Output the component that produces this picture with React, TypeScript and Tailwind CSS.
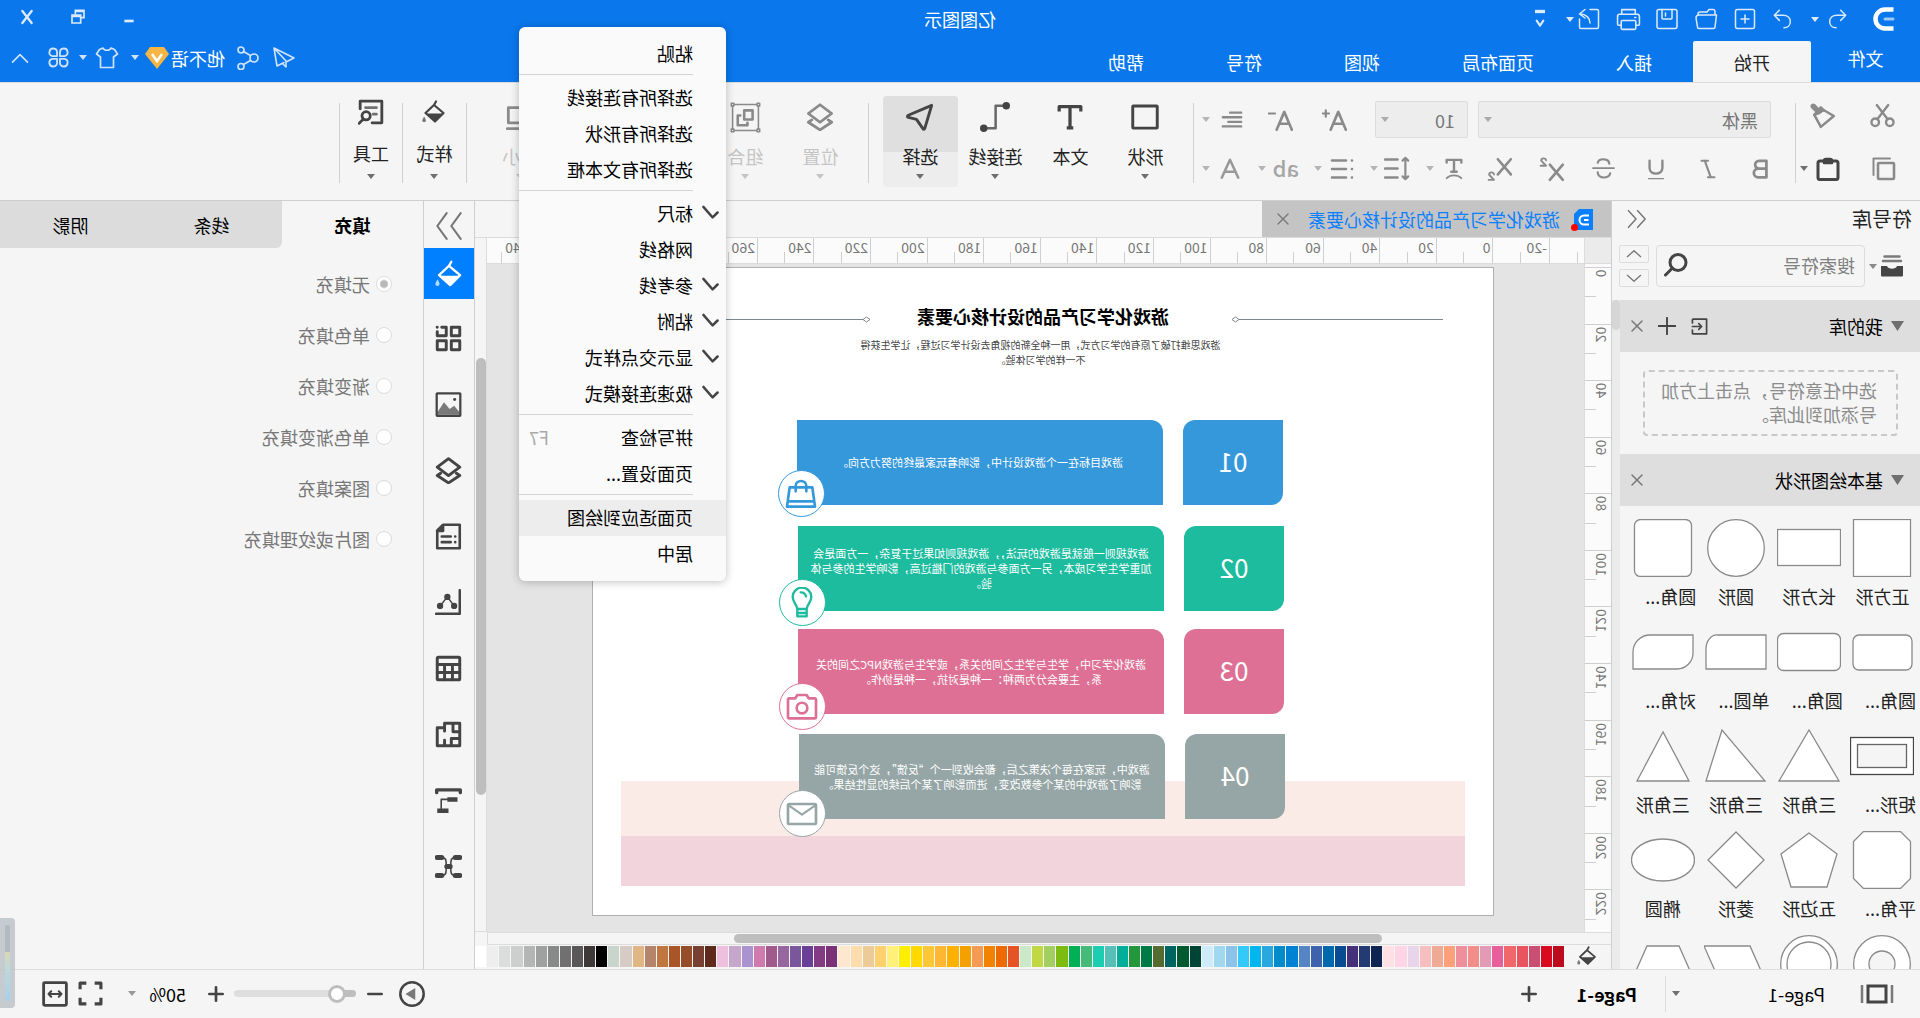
import { useState, type ReactNode } from "react";
import clsx from "clsx";

/* ---------- data ---------- */

const TABS = ["开始", "插入", "页面布局", "视图", "符号", "帮助"];

const SWATCHES = [
  "#bb0b1c", "#d9091f", "#c94f73", "#e8555f", "#f0686c", "#e7609b", "#e39ab4", "#f18e8a", "#f08f9c", "#ffa07a",
  "#eeaa94", "#f6bfbf", "#e8d5ea", "#ffd4e4", "#ffe0e4", "#0e2552", "#233a72", "#45307a", "#084b93", "#0068ac",
  "#3f62ad", "#5585c3", "#0082d4", "#008bcb", "#29a8e0", "#00b6ee", "#33c9f9", "#8bc3ea", "#a0d8ef", "#cdebf8",
  "#004436", "#005a2f", "#006460", "#556b2f", "#007a47", "#24973d", "#00ae9a", "#57bfb8", "#1dcdb1", "#45ba79",
  "#00b054", "#7dbb10", "#a3cf62", "#bfd844", "#cbe8c9", "#e55425", "#ee6a00", "#f28300", "#f39a55", "#f4a100",
  "#ffb100", "#ffb733", "#fbc737", "#ffd900", "#ffee00", "#fff07a", "#ffd06e", "#eccb96", "#ffdcab", "#fee7cf",
  "#7b3177", "#833b84", "#6a3f97", "#7a569b", "#9767a0", "#a15a8c", "#cf7bb0", "#ab93cf", "#c6a6cb", "#edc1de",
  "#5e2a1b", "#783f33", "#964e2a", "#a95527", "#c0773f", "#b4856b", "#dfb684", "#d6cbc5", "#c9d4cc", "#000000",
  "#3f3838", "#595757", "#707070", "#888989", "#9fa1a0", "#b4b6b5", "#cdcfce", "#dbdcdc", "#eeeeee", "#ffffff",
];

type MenuEntry = { label: string; checked?: boolean; shortcut?: string; active?: boolean };

const MENU: MenuEntry[][] = [
  [{ label: "粘贴" }],
  [{ label: "选择所有连接线" }, { label: "选择所有形状" }, { label: "选择所有文本框" }],
  [
    { label: "标尺", checked: true },
    { label: "网格线" },
    { label: "参考线", checked: true },
    { label: "粘附", checked: true },
    { label: "显示交点样式", checked: true },
    { label: "极速连接模式", checked: true },
  ],
  [{ label: "拼写检查", shortcut: "F7" }, { label: "页面设置..." }],
  [{ label: "页面适应到绘图", active: true }, { label: "居中" }],
];

const FILLS = ["无填充", "单色填充", "渐变填充", "单色渐变填充", "图案填充", "图片或纹理填充"];

const SHAPES: { label: string; art: ReactNode }[] = [
  { label: "正方形", art: <rect x="3.5" y="0.5" width="57" height="57" /> },
  { label: "长方形", art: <rect x="0.5" y="10.5" width="63" height="36" /> },
  { label: "圆形", art: <circle cx="32" cy="29" r="28.3" /> },
  { label: "圆角...", art: <rect x="3.5" y="0.5" width="57" height="57" rx="6" /> },
  { label: "圆角...", art: <rect x="2" y="12" width="59" height="35" rx="6" /> },
  { label: "圆角...", art: <rect x="0.5" y="10.5" width="63" height="37" rx="6" /> },
  { label: "单圆...", art: <path d="M2 12h48a11 14 0 0 1 12 14v20H2Z" /> },
  { label: "对角...", art: <path d="M2 12h43a17 17 0 0 1 17 17v17H18a16 16 0 0 1-16-16Z" /> },
  { label: "矩形...", art: <><rect x="0.5" y="10.5" width="63" height="37" stroke="#444" /><rect x="7.5" y="17.5" width="49" height="23" fill="#f5f5f5" stroke="#666" /></> },
  { label: "三角形", art: <path d="M32 3 62 54H2Z" /> },
  { label: "三角形", art: <path d="M46 3 62 54H3Z" /> },
  { label: "三角形", art: <path d="M32 5 58 54H6Z" /> },
  { label: "平角...", art: <path d="M13.5.5h37l10 10v37l-10 10h-37l-10-10v-37Z" /> },
  { label: "五边形", art: <path d="M32 2 60 23 50 56H14L4 23Z" /> },
  { label: "菱形", art: <path d="M32 1 60 29 32 57 4 29Z" /> },
  { label: "椭圆", art: <ellipse cx="32" cy="29" rx="31.5" ry="21" /> },
  { label: "", art: <><circle cx="32" cy="29" r="28.3" /><circle cx="32" cy="29" r="13" fill="#f5f5f5" /></> },
  { label: "", art: <><circle cx="32" cy="29" r="28.3" /><circle cx="32" cy="29" r="22" /></> },
  { label: "", art: <path d="M18 11h46L48 47H2Z" /> },
  { label: "", art: <path d="M16 11h32l16 36H0Z" /> },
];

/* ---------- icons ---------- */

type IcoProps = { size?: number; sw?: number; className?: string; children: ReactNode };

function Ico({ size = 24, sw = 2, className, children }: IcoProps) {
  return (
    <svg
      width={size}
      height={size}
      viewBox="0 0 24 24"
      fill="none"
      stroke="currentColor"
      strokeWidth={sw}
      strokeLinecap="round"
      strokeLinejoin="round"
      className={clsx("shrink-0", className)}
      aria-hidden
    >
      {children}
    </svg>
  );
}

function Caret({ className = "text-[#6f6f6f]" }: { className?: string }) {
  return (
    <svg width="8" height="5" viewBox="0 0 8 5" className={clsx("shrink-0", className)} aria-hidden>
      <path d="M0 0h8L4 5Z" fill="currentColor" />
    </svg>
  );
}

const bucket = (
  <>
    <path d="M10 1.5 12 5 2.5 13 11 21.5 20.5 13 11.5 4.5" />
    <path d="M3 13.5h17L11 22Z" fill="currentColor" stroke="none" />
    <path d="M21.8 16.5c1.6 2.6 1.9 3.3 1.9 4a1.8 1.8 0 0 1-3.6 0c0-.7.3-1.4 1.7-4Z" fill="currentColor" stroke="none" opacity=".7" />
  </>
);

const layers = (
  <>
    <path d="M12 1.5 22 9l-10 7.5L2 9Z" />
    <path d="M5 14.5 2 16.5 12 23l10-6.5-3-2" />
  </>
);

/* ---------- title bar ---------- */

function IconButton({ label, className, children }: { label: string; className?: string; children: ReactNode }) {
  return (
    <button type="button" aria-label={label} className={clsx("flex items-center justify-center shrink-0", className)}>
      {children}
    </button>
  );
}

function TitleBar() {
  const [tab, setTab] = useState("开始");
  return (
    <header className="bg-[#0a77ec] text-white shrink-0">
      <div className="grid grid-cols-[1fr_auto_1fr] h-[41px] text-[#dbeafc]">
        <div className="flex items-center pl-6 pb-[3px]">
          <Ico size={24} sw={4.5} className="text-white">
            <path d="M2.5 2.5H11a9.5 9.5 0 0 1 0 19H2.5" strokeLinecap="butt" />
            <path d="M3 12h8" strokeWidth="3" opacity=".6" />
          </Ico>
          <IconButton label="撤销" className="ml-[23px] w-6">
            <Ico size={22} sw={1.6}><path d="M8 2.5 2.5 8 8 13.5M3 8h9c5 0 8 3 8 7s-3 6.5-7 6.5" /></Ico>
          </IconButton>
          <Caret className="ml-1.5 text-[#dbeafc]" />
          <IconButton label="恢复" className="ml-4 w-6">
            <Ico size={22} sw={1.6}><path d="M16 2.5 21.5 8 16 13.5M21 8h-9c-5 0-8 3-8 7s3 6.5 7 6.5" /></Ico>
          </IconButton>
          <IconButton label="新建" className="w-[39px] ml-[6px]">
            <Ico size={24} sw={1.5}><rect x="2.5" y="2.5" width="19" height="19" rx="2" /><path d="M12 8v8M8 12h8" /></Ico>
          </IconButton>
          <IconButton label="打开" className="w-[39px]">
            <Ico size={24} sw={1.5}><path d="M3 8V4.5a2 2 0 0 1 2-2h4L11 5h7a2 2 0 0 1 2 2v1M1.5 8H19c2 0 3 1 3 3l-1.5 9a1.5 1.5 0 0 1-1.5 1.5H4.5A1.5 1.5 0 0 1 3 20Z" /></Ico>
          </IconButton>
          <IconButton label="保存" className="w-[39px]">
            <Ico size={24} sw={1.5}><rect x="2" y="2.5" width="20" height="19" rx="2" /><path d="M7 2.5V11a1 1 0 0 0 1 1h8a1 1 0 0 0 1-1V2.5M13.5 6v3" /></Ico>
          </IconButton>
          <IconButton label="打印" className="w-[39px]">
            <Ico size={25} sw={1.5}><path d="M5.5 7V2.5h13V7M5 17.5H2.5a1 1 0 0 1-1-1V9a2 2 0 0 1 2-2h17a2 2 0 0 1 2 2v7.5a1 1 0 0 1-1 1H19" /><rect x="5" y="13" width="14" height="8.5" rx="1" /><path d="M5 10h1" /></Ico>
          </IconButton>
          <IconButton label="导出" className="w-[39px]">
            <Ico size={24} sw={1.5}><path d="M11 2.5H4A1.5 1.5 0 0 0 2.5 4v16A1.5 1.5 0 0 0 4 21.5h16a1.5 1.5 0 0 0 1.5-1.5v-8M16 2.5 21.5 7 16 11M21 7c-6 0-10 4-10 9" /></Ico>
          </IconButton>
          <Caret className="-ml-1 text-[#dbeafc]" />
          <IconButton label="自定义" className="ml-[14px] w-6">
            <Ico size={20} sw={2.5}><path d="M6 3h12" strokeWidth="4" strokeLinecap="butt" /><path d="m8 14 4 6 4-6" /></Ico>
          </IconButton>
        </div>
        <div className="self-center pb-[3px] text-[18px] leading-6 text-white">亿图图示</div>
        <div className="flex items-center justify-end pr-3 pb-2 gap-[21px]">
          <IconButton label="最小化" className="w-[30px]">
            <Ico size={16} sw={4}><path d="M5 18h14" strokeLinecap="butt" /></Ico>
          </IconButton>
          <IconButton label="还原" className="w-[30px]">
            <Ico size={16} sw={2.5}><path d="M16 7V2H3v11h5M3 3.5h13" strokeLinejoin="miter" /><path d="M8 9h13v12H8ZM8 11h13" strokeLinejoin="miter" /></Ico>
          </IconButton>
          <IconButton label="关闭" className="w-[30px]">
            <Ico size={16} sw={3.5}><path d="m5 3 14 18M19 3 5 21" /></Ico>
          </IconButton>
        </div>
      </div>

      <div className="flex h-[41px] text-[18px] leading-6">
        <button type="button" className="w-[109px] pb-2">文件</button>
        <nav className="flex">
          {TABS.map((t) => (
            <button
              key={t}
              type="button"
              onClick={() => setTab(t)}
              className={clsx("px-[41px] rounded-t-xs", t === tab && "bg-[#f5f5f5] text-[#222]")}
            >
              {t}
            </button>
          ))}
        </nav>
        <div className="ml-auto flex items-center pb-[8px] pr-[10px] text-[#cfe3fb]">
          <Ico size={24} sw={1.6}><path d="M22 2 2 12l7 3.5M22 2l-3 18-7-3.5M22 2 10 15v6l3-3" /></Ico>
          <Ico size={24} sw={1.7} className="ml-3">
            <circle cx="6" cy="12" r="4" /><circle cx="19" cy="4" r="3" /><circle cx="19" cy="20.5" r="3" /><path d="m9.5 9.5 7-4M9.5 14.5l7 4" />
          </Ico>
          <span className="ml-[11px] pt-px text-white">他不语</span>
          <svg width="26" height="24" viewBox="0 0 26 24" className="ml-px" aria-hidden>
            <path d="M6 1h14l5 7-12 15L1 8Z" fill="#f6b645" />
            <path d="m8 8 5 7 5-7" fill="none" stroke="#fff" strokeWidth="2.5" />
          </svg>
          <Caret className="ml-[5px] text-[#cfe3fb]" />
          <Ico size={24} sw={1.7} className="ml-3">
            <path d="M8 2c1 3 7 3 8 0l3.5 1.5 3 4.5-4 3v10.5h-13V11l-4-3 3-4.5Z" />
          </Ico>
          <Caret className="ml-2 text-[#cfe3fb]" />
          <Ico size={23} sw={1.9} className="ml-[9px]">
            <path d="M10.5 10.5h-5a4 4 0 1 1 5-4Zm3 0h5a4 4 0 1 0-5-4Zm-3 3h-5a4 4 0 1 0 5 4Zm3 0h5a4 4 0 1 1-5 4Z" />
          </Ico>
          <IconButton label="收起功能区" className="ml-[17px]">
            <Ico size={20} sw={2}><path d="m3 17 9-9 9 9" /></Ico>
          </IconButton>
        </div>
      </div>
    </header>
  );
}

/* ---------- ribbon ---------- */

function Sep() {
  return <div className="w-px h-20 mt-5 bg-[#cfcfcf] shrink-0" />;
}

function FontTool({ label, wide, children }: { label: string; wide?: boolean; children: ReactNode }) {
  if (wide)
    return (
      <button type="button" aria-label={label} className="flex items-center w-14">
        <span className="w-10 flex justify-center">{children}</span>
        <Caret className="text-[#b5b5b5]" />
      </button>
    );
  return <IconButton label={label} className="w-[52px]">{children}</IconButton>;
}

function FontSelect({ label, value, className }: { label: string; value: string; className: string }) {
  return (
    <div className="relative">
      <select
        aria-label={label}
        className={clsx(
          "appearance-none block h-[37px] pl-3 bg-[#ededed] border border-[#dcdcdc] rounded-xs text-[18px] leading-6 text-[#777]",
          className,
        )}
      >
        <option>{value}</option>
      </select>
      <Caret className="absolute right-[6px] top-4 text-[#aaa]" />
    </div>
  );
}

type BigToolProps = { label: string; width?: string; caret?: boolean; active?: boolean; disabled?: boolean; raised?: boolean; children: ReactNode };

function BigTool({ label, width = "w-[75px]", caret = true, active, disabled, raised, children }: BigToolProps) {
  return (
    <button
      type="button"
      disabled={disabled}
      className={clsx(
        "mt-[13px] h-[91px] flex flex-col items-center shrink-0 rounded-sm text-[18px] leading-6",
        width,
        raised ? "pt-[2px]" : "pt-[7px]",
        active && "bg-[linear-gradient(to_bottom,#dfdfdf_56px,#ededed_56px)]",
        disabled ? "text-[#c4c4c4]" : "text-[#222]",
      )}
    >
      <span className={clsx("h-7 flex items-center", disabled ? "text-[#8a8a8a]" : "text-[#444]")}>{children}</span>
      <span className={raised ? "mt-[15px]" : "mt-[13px]"}>{label}</span>
      {caret && <Caret className={clsx(raised ? "mt-[9px]" : "mt-[6px]", disabled ? "text-[#c4c4c4]" : "text-[#6f6f6f]")} />}
    </button>
  );
}

function Ribbon() {
  return (
    <div className="h-[119px] shrink-0 flex bg-[#f5f5f5] border-b border-[#cfcfcf] border-t border-t-[#dcdcdc]">
      <div className="w-[124px] pt-[18px] flex flex-col gap-3 text-[#8a8a8a] shrink-0">
        <div className="flex h-[37px] pb-2">
          <IconButton label="剪切" className="w-[74px]">
            <Ico size={25} sw={2.3}><circle cx="5" cy="18.5" r="3.6" /><circle cx="19" cy="18.5" r="3.6" /><path d="M7 15.5 17.5 2M17 15.5 6.5 2" /></Ico>
          </IconButton>
          <IconButton label="格式刷" className="w-[46px]">
            <Ico size={26} sw={2.3}><path d="M11.5 6.5 2 12l12 10 6-11Z" /><path d="m11.5 6.5 8.5 4.5-6-7Z" fill="currentColor" /><path d="m16 8 5-5" strokeWidth="5" /></Ico>
          </IconButton>
        </div>
        <div className="flex h-[37px]">
          <IconButton label="复制" className="w-[72px]">
            <Ico size={24} sw={2.6}><rect x="2" y="6" width="16" height="16" rx="1" /><path d="M6 1.5h16.5V18" strokeWidth="2" /></Ico>
          </IconButton>
          <button type="button" aria-label="粘贴" className="flex items-center text-[#444]">
            <span className="w-10 flex justify-center">
              <Ico size={24} sw={3}><rect x="2" y="4" width="20" height="18.5" rx="2" /><path d="M8 6h8V4a2 2 0 0 0-2-2h-4a2 2 0 0 0-2 2Z" strokeWidth="2.5" /></Ico>
            </span>
            <Caret />
          </button>
        </div>
      </div>
      <Sep />

      <div className="pt-[18px] pl-[9px] flex flex-col gap-3 text-[#8a8a8a] shrink-0">
        <div className="flex items-center h-[37px]">
          <div className="flex gap-[10px] ml-[15px]">
            <FontSelect label="字体" value="黑体" className="w-[293px]" />
            <FontSelect label="字号" value="10" className="w-[93px]" />
          </div>
          <IconButton label="增大字号" className="w-[54px] ml-[13px]">
            <Ico size={26} sw={2.4}><path d="M2 21 9 4.5 16 21M5 15.5h8" /><path d="M20.5 3v6M17.5 6h6" strokeWidth="2" /></Ico>
          </IconButton>
          <IconButton label="减小字号" className="w-[54px]">
            <Ico size={26} sw={2.4}><path d="M2 21 9 4.5 16 21M5 15.5h8" /><path d="M17.5 6h6" strokeWidth="2" /></Ico>
          </IconButton>
          <button type="button" aria-label="对齐" className="flex items-center">
            <span className="w-11 flex justify-center">
              <Ico size={22} sw={2.6}><path d="M2 4h12M2 9h20M2 14h14M2 19h20" /></Ico>
            </span>
            <Caret className="text-[#b5b5b5]" />
          </button>
        </div>
        <div className="flex items-center h-[37px]">
          <FontTool label="加粗"><Ico size={22} sw={3}><path d="M5 3h8a4.3 4.3 0 0 1 0 8.6H5ZM5 11.6h9a4.7 4.7 0 0 1 0 9.4H5Z" /></Ico></FontTool>
          <FontTool label="斜体"><Ico size={22} sw={2.4}><path d="M12 3h7M5 21h7M15.5 3 9 21" /></Ico></FontTool>
          <FontTool label="下划线"><Ico size={22} sw={2.6}><path d="M5 3v8c0 8 14 8 14 0V3" /><path d="M4 22.5h16" strokeWidth="1.6" /></Ico></FontTool>
          <FontTool label="删除线"><Ico size={23} sw={2.3}><path d="M18 6c-1-5-12-5-12 1M18 16c0 7-12 7-13 1" /><path d="M1 11.5h22" strokeWidth="1.8" /></Ico></FontTool>
          <FontTool label="上标"><Ico size={26} sw={2.4}><path d="m2 8 12 14M14 8 2 22" /><path d="M17.5 4c0-2.5 5-2.5 4.5.3L17.5 9h5" strokeWidth="1.7" /></Ico></FontTool>
          <FontTool label="下标"><Ico size={26} sw={2.4}><path d="m2 3 12 14M14 3 2 17" /><path d="M17.5 17c0-2.5 5-2.5 4.5.3L17.5 22h5" strokeWidth="1.7" /></Ico></FontTool>
          <FontTool label="文字方向" wide><Ico size={22} sw={2.6}><path d="M4 5V2h16v3M12 2v13M9 15h6" /><path d="M4 22c4-4 12-4 16 0" strokeWidth="2" /></Ico></FontTool>
          <FontTool label="行距" wide><Ico size={27} sw={2.3}><path d="M5 2.5v19M2.5 5 5 2.5 7.5 5M2.5 19 5 21.5 7.5 19" strokeWidth="1.9" /><path d="M12 4h11M12 12h11M12 20h11" /></Ico></FontTool>
          <FontTool label="项目符号" wide><Ico size={24} sw={2.6}><path d="M8 3.5h14M8 12h14M8 20.5h14M2 3.5h.1M2 12h.1M2 20.5h.1" /></Ico></FontTool>
          <FontTool label="大小写" wide><span className="pb-1 text-[22px] leading-7 font-medium text-[#a5a5a5]">ab</span></FontTool>
          <FontTool label="字体颜色" wide><Ico size={22} sw={2.8} className="text-[#999]"><path d="M3 21.5 12 2l9 19.5M6.5 15h11" /></Ico></FontTool>
        </div>
      </div>
      <Sep />

      <div className="flex ml-[10px]">
        <BigTool label="形状"><Ico size={28} sw={2.5}><rect x="1.5" y="2.5" width="21" height="19" rx=".5" /></Ico></BigTool>
        <BigTool label="文本" caret={false}><Ico size={26} sw={3}><path d="M2 7V2.5h20V7M12 3v19M9 22h6" strokeLinecap="butt" /></Ico></BigTool>
        <BigTool label="连接线">
          <Ico size={30} sw={2}>
            <path d="M4 3h7.5v18H20" opacity=".8" />
            <circle cx="3" cy="3" r="3" fill="currentColor" stroke="none" /><circle cx="21" cy="21" r="3" fill="currentColor" stroke="none" />
          </Ico>
        </BigTool>
        <BigTool label="选择" active><Ico size={28} sw={2.5}><path d="M2 2 22 10.5c1 .5 1 1.5 0 1.8L15 14l-5.5 8c-.5.8-1.3.7-1.6-.3Z" /></Ico></BigTool>
      </div>
      <div className="ml-[14px]"><Sep /></div>
      <div className="flex ml-[10px]">
        <BigTool label="位置" disabled><Ico size={28} sw={2.4}>{layers}</Ico></BigTool>
        <BigTool label="组合" disabled>
          <Ico size={31} sw={1.2}>
            <rect x="2" y="2" width="20" height="20" />
            <path d="M1 1h2v2H1ZM21 1h2v2h-2ZM1 21h2v2H1ZM21 21h2v2h-2Z" fill="#f5f5f5" />
            <path d="M6.5 6.5H13v7H6.5ZM16 10.5h2V18h-7.5v-2" strokeWidth="2" />
          </Ico>
        </BigTool>
        <div className="w-[150px]" />
        <BigTool label="大小" disabled><Ico size={28} sw={2.4}><path d="M2 4h20v13H2ZM1 22h22" /></Ico></BigTool>
      </div>
      <div className="ml-4"><Sep /></div>
      <BigTool label="样式" width="w-[63px]" raised><Ico size={24} sw={2.2}>{bucket}</Ico></BigTool>
      <Sep />
      <BigTool label="工具" width="w-[62px]" raised>
        <Ico size={26} sw={2.6}>
          <path d="M11 22H2V2h20v7" /><path d="M7 8h10M7 14h3" opacity=".75" />
          <circle cx="16.5" cy="15.5" r="3.8" /><path d="m19 18.5 4 4" />
        </Ico>
      </BigTool>
      <Sep />
    </div>
  );
}

/* ---------- symbol library ---------- */

function SectionHead({ title, children }: { title: string; children?: ReactNode }) {
  return (
    <div className="h-[52px] bg-[#dedede] flex items-center pl-4 pr-[11px] text-[18px] leading-6 text-black">
      <svg width="13" height="10" viewBox="0 0 13 10" className="text-[#6f6f6f]" aria-hidden><path d="M0 0h13L6.5 10Z" fill="currentColor" /></svg>
      <span className="ml-2">{title}</span>
      <span className="ml-auto flex items-center gap-[15px] text-[#444]">
        {children}
        <IconButton label={`关闭${title}`}><Ico size={12} sw={3} className="text-[#777]"><path d="m2 2 20 20M22 2 2 22" /></Ico></IconButton>
      </span>
    </div>
  );
}

function SymbolPanel() {
  return (
    <aside className="w-[309px] shrink-0 flex flex-col border-r border-[#cfcfcf] overflow-hidden">
      <div className="h-9 flex items-center justify-between pl-2 pr-[14px]">
        <h2 className="text-[20px] leading-7 text-[#222]">符号库</h2>
        <IconButton label="折叠面板"><Ico size={20} sw={1.8} className="text-[#777]"><path d="M10 2 1 12l9 10M21 2l-9 10 9 10" /></Ico></IconButton>
      </div>
      <div className="flex items-center h-[42px] mt-2 pl-4 pr-[7px] shrink-0">
        <Ico size={24} sw={2.5} className="text-[#444]">
          <path d="M4.5 2.5h15M3 7h18" opacity=".7" /><path d="M1 12h6c1 3.5 9 3.5 10 0h6v9.5a1 1 0 0 1-1 1H2a1 1 0 0 1-1-1Z" fill="currentColor" stroke="none" />
        </Ico>
        <Caret className="ml-[3px] text-[#8a8a8a]" />
        <div className="relative ml-[4px]">
          <input
            type="text"
            aria-label="搜索符号"
            placeholder="搜索符号"
            className="block w-[209px] h-[42px] pl-[9px] pb-[2px] border border-[#dcdcdc] rounded-sm text-[18px] placeholder:text-[#808080] bg-transparent"
          />
          <Ico size={24} sw={3} className="absolute right-2 top-2 text-[#444]"><circle cx="10" cy="9.5" r="8" /><path d="m16 15.5 6.5 6.5" /></Ico>
        </div>
        <div className="ml-[7px] flex flex-col justify-between h-full">
          <button type="button" aria-label="上一个" className="w-[30px] h-[18px] flex items-center justify-center border border-[#dcdcdc] rounded-xs text-[#777]"><Ico size={16} sw={2}><path d="m2 16 10-9 10 9" /></Ico></button>
          <button type="button" aria-label="下一个" className="w-[30px] h-[18px] flex items-center justify-center border border-[#dcdcdc] rounded-xs text-[#777]"><Ico size={16} sw={2}><path d="m2 8 10 9 10-9" /></Ico></button>
        </div>
      </div>

      <div className="mt-[13px] flex flex-1 min-h-0">
        <div className="flex-1 min-w-0 overflow-hidden">
          <SectionHead title="我的库">
            <IconButton label="导入"><Ico size={17} sw={2.4}><path d="M22 7V2.5a1 1 0 0 0-1-1H2v21h19a1 1 0 0 0 1-1V17M22 12H9M13 8l-4 4 4 4" /></Ico></IconButton>
            <IconButton label="添加"><Ico size={18} sw={2.5}><path d="M12 1v22M1 12h22" /></Ico></IconButton>
          </SectionHead>
          <div className="h-[102px] pt-[18px] pl-[22px] pr-[23px]">
            <p className="h-[66px] pl-[19px] pt-[6px] border-2 border-dashed border-[#c8c8c8] rounded text-[18px] leading-6 text-[#8c8c8c] whitespace-nowrap">
              选中任意符号，点击上方加
              <br />
              号添加到此库。
            </p>
          </div>
          <SectionHead title="基本绘图形状" />
          <div className="grid grid-cols-4 w-[293px] ml-px pt-[13px]">
            {SHAPES.map((s, i) => (
              <button key={i} type="button" className="h-[104px] flex flex-col items-center text-[18px] leading-6 text-[#222]">
                <svg width="64" height="58" viewBox="0 0 64 58" className="shrink-0" fill="#fff" stroke="#8a8a8a" strokeWidth="1.3" aria-hidden>{s.art}</svg>
                <span className={clsx("mt-[7px] whitespace-nowrap", s.label.endsWith("...") && "self-start ml-[3px]")}>{s.label}</span>
              </button>
            ))}
          </div>
        </div>
        <div className="w-2 bg-[#ebebeb]">
          <div className="h-[30px] rounded-full bg-[#d6d6d6]" />
        </div>
      </div>
    </aside>
  );
}

/* ---------- canvas ---------- */

function Ruler() {
  return (
    <div className="h-[26px] flex-1 min-w-0 overflow-hidden bg-[#fbfbfb] border-b border-[#dcdcdc] flex">
      <div className="w-[6px] shrink-0" />
      <div className="w-7 shrink-0 h-[11px] self-end border-l border-[#cfcfcf]" />
      <div className="flex w-[1075px] shrink-0">
        {Array.from({ length: 19 }, (_, i) => (
          <div key={i} className="flex-1 min-w-0 flex border-l border-[#cfcfcf]">
            <span className="flex-1 w-0 pl-[2px] text-[14px] leading-[18px] text-[#777] whitespace-nowrap">{(i - 1) * 20}</span>
            <span className="flex-1 h-[11px] self-end border-l border-[#cfcfcf]" />
          </div>
        ))}
      </div>
    </div>
  );
}

function SideRuler() {
  return (
    <div className="w-[27px] shrink-0 overflow-hidden bg-[#fbfbfb] border-r border-[#dcdcdc] pt-[3px]">
      <div className="h-[679px] flex flex-col">
        {Array.from({ length: 12 }, (_, i) => (
          <div key={i} className="flex-1 min-h-0 flex flex-col border-t border-[#cfcfcf]">
            <span className="flex-1 h-0 pb-[2px] pl-0.5 self-start rotate-180 [writing-mode:vertical-rl] text-right text-[14px] leading-[18px] text-[#777] whitespace-nowrap">{i * 20}</span>
            <span className="flex-1 w-[11px] self-end border-t border-[#cfcfcf]" />
          </div>
        ))}
      </div>
    </div>
  );
}

type CardProps = { no: string; bg: string; place: string; badge: string; icon: ReactNode; children: ReactNode };

function Card({ no, bg, place, badge, icon, children }: CardProps) {
  return (
    <div className={clsx("absolute flex h-[85px] gap-5", place)}>
      <div className={clsx("w-[100px] rounded-tr-xl rounded-bl-xl pb-1 flex items-center justify-center text-[26px] text-white", bg)}>{no}</div>
      <div className={clsx("w-[366px] rounded-tl-xl flex items-center justify-center text-center text-[11px] leading-[15px] text-white whitespace-nowrap", bg)}>
        <p>{children}</p>
      </div>
      <div className={clsx("absolute w-[47px] h-[47px] rounded-full bg-white border border-current flex items-center justify-center", badge)}>
        {icon}
      </div>
    </div>
  );
}

function Page() {
  return (
    <div className="absolute left-[90px] top-[3px] w-[902px] h-[649px] bg-white border border-[#b0b0b0]">
      <div className="absolute left-[28px] top-[513px] w-[844px] h-[55px] bg-[#faebe6]" />
      <div className="absolute left-[28px] top-[568px] w-[844px] h-[50px] bg-[#f2d5dc]" />

      <svg className="absolute left-[50px] top-[46px]" width="788" height="10" viewBox="0 0 788 10" fill="none" stroke="#7f8690" aria-hidden>
        <path d="M0 5.5h204M580 5.5h208" />
        <path d="M204 5.5 207.5 3l3.5 2.5-3.5 2.5ZM573 5.5 576.5 3l3.5 2.5-3.5 2.5Z" />
      </svg>
      <h1 className="absolute left-[200px] top-[36px] w-[500px] text-center text-[18px] leading-6 font-bold text-black">游戏化学习产品的设计核心要素</h1>
      <p className="absolute left-[200px] top-[69px] w-[505px] text-center text-[10px] leading-[15px] text-[#444]">
        游戏思维打破了原有的学习方式，用一种全新的视角去设计学习过程，让学生获得
        <br />
        不一样的学习体验。
      </p>

      <Card
        no="01" bg="bg-[#3598db]" place="left-[210px] top-[152px]" badge="-right-[19px] top-[50px] text-[#3598db]"
        icon={<Ico size={32} sw={2}><path d="M3.5 7h17l2 14.5h-21ZM2.5 17.5h19M8 10V6c0-5 8-5 8 0v4" /></Ico>}
      >
        游戏目标在一个游戏设计中，影响着玩家最终的努力方向。
      </Card>
      <Card
        no="02" bg="bg-[#1dbc9f]" place="left-[209px] top-[258px]" badge="-right-[19px] top-[53px] text-[#1dbc9f]"
        icon={<Ico size={32} sw={1.8}><path d="M8.5 16.5c0-3-3.5-5-3.5-9a7 7 0 0 1 14 0c0 4-3.5 6-3.5 9ZM8.5 19.5h7M8.5 16.5V22h7v-5.5M13 4a4 4 0 0 0-4 3" /></Ico>}
      >
        游戏规则一般就是游戏的玩法，，游戏规则如果过于复杂，一方面是会
        <br />
        加重学生学习成本，另一方面参与游戏的门槛过高，影响学生的参与体
        <br />
        验。
      </Card>
      <Card
        no="03" bg="bg-[#dd7094]" place="left-[209px] top-[361px]" badge="-right-[19px] top-[54px] text-[#dd7094]"
        icon={<Ico size={32} sw={2}><path d="M1.5 6.5a1 1 0 0 1 1-1H7L8.5 3h7L17 5.5h4.5a1 1 0 0 1 1 1v13a1 1 0 0 1-1 1h-19a1 1 0 0 1-1-1Z" /><circle cx="12" cy="12.8" r="4" /></Ico>}
      >
        游戏化学习中，学生与学生之间的关系，或学生与游戏NPC之间的关
        <br />
        系，主要会分为两种：一种是对抗，一种是协作。
      </Card>
      <Card
        no="04" bg="bg-[#96a6a6]" place="left-[208px] top-[466px]" badge="-right-5 top-[56px] text-[#96a6a6]"
        icon={<Ico size={32} sw={2}><rect x="1.5" y="4.5" width="21" height="15" rx="1" /><path d="m2 5.5 10 7 10-7" strokeWidth="1.5" /></Ico>}
      >
        游戏中，玩家在每个决策之后，都会收到一个“反馈”，这个反馈可能
        <br />
        影响了游戏中的某个参数改变，进而影响了某个后续的显性结果。
      </Card>
    </div>
  );
}

function Workspace() {
  return (
    <main className="flex-1 min-w-0 flex flex-col">
      <div className="h-[37px] shrink-0 flex border-b border-[#dcdcdc]">
        <div className="flex items-center bg-[#c4c4c4] pl-[18px] pr-[15px] text-[18px] leading-6 text-[#0a7fff]">
          <span className="relative">
            <svg width="19" height="21" viewBox="0 0 19 21" aria-hidden>
              <path d="M0 0h14l5 5v16H0Z" fill="#0a7fff" />
              <path d="M4 6.5h5a4.3 4.3 0 0 1 0 9H4M4.5 11H9" fill="none" stroke="#fff" strokeWidth="2" />
            </svg>
            <i className="absolute -right-[3px] -bottom-[1px] w-[7px] h-[7px] rounded-full bg-[#f00]" />
          </span>
          <span className="ml-[14px]">游戏化学习产品的设计核心要素</span>
          <IconButton label="关闭文档" className="ml-[19px]"><Ico size={12} sw={2.8} className="text-[#777]"><path d="m2 2 20 20M22 2 2 22" /></Ico></IconButton>
        </div>
      </div>
      <div className="flex flex-1 min-h-0">
        <div className="flex-1 min-w-0 flex flex-col">
          <div className="flex shrink-0">
            <div className="w-[27px] bg-[#ebebeb] border-r border-b border-[#dcdcdc]" />
            <Ruler />
          </div>
          <div className="flex flex-1 min-h-0">
            <SideRuler />
            <div className="relative flex-1 overflow-hidden bg-[#e4e4e4]">
              <Page />
            </div>
          </div>
        </div>
        <div className="w-3 shrink-0 border-l border-b border-[#dcdcdc] bg-[#f5f5f5]">
          <div className="mt-[120px] h-[437px] w-[10px] rounded-md bg-[#bebebe]" />
        </div>
      </div>
      <div className="h-[13px] shrink-0 mr-3 border-y border-r border-[#dcdcdc] pt-[1px] pl-[229px]">
        <div className="w-[648px] h-[9px] rounded-md bg-[#bebebe]" />
      </div>
      <div className="h-6 shrink-0 flex items-start pt-px">
        <IconButton label="填充颜色" className="w-[47px] text-[#444]"><Ico size={20} sw={2.2}>{bucket}</Ico></IconButton>
        <div className="flex flex-1 gap-px h-[21px]">
          {SWATCHES.map((c) => (
            <button key={c} type="button" aria-label={c} className="flex-1" style={{ backgroundColor: c }} />
          ))}
        </div>
      </div>
    </main>
  );
}

/* ---------- right side ---------- */

const RAIL: { label: string; art: ReactNode }[] = [
  { label: "布局", art: <path d="M2 2h7.5v7.5H2ZM2 14h7.5v8H2ZM14 14h8v8h-8ZM18 2h-4v7.5h8V6M22 2h.1" /> },
  { label: "图片", art: <><rect x="1.5" y="2" width="21" height="20" rx=".5" strokeWidth="2" /><path d="m2 19 5-6 4 3 5-6 6 9v2H2Z" fill="currentColor" stroke="none" opacity=".7" /><path d="M6.5 7.5h.1" /></> },
  { label: "图层", art: layers },
  { label: "大纲", art: <><path d="M2 1.5h14.5L22 7v15.5H2Z" strokeWidth="2.3" /><path d="M17 2v5h5Z" fill="currentColor" /><path d="M6 12h.1M6 17h.1M10 12h8M10 17h8" strokeWidth="2.3" /></> },
  { label: "图表", art: <><path d="M2 1v21h21" strokeWidth="2.2" /><circle cx="7" cy="15" r="2.8" fill="currentColor" stroke="none" /><circle cx="13" cy="7" r="2.8" fill="currentColor" stroke="none" /><circle cx="19.5" cy="15" r="2.8" fill="currentColor" stroke="none" /><path d="m7 15 6-8 6.5 8" strokeWidth="1.4" /></> },
  { label: "表格", art: <><rect x="2" y="2" width="20" height="20" rx="1" /><path d="M2 8.5h20M2 15.5h20M8.5 9v13M15.5 9v13" /></> },
  { label: "平面图", art: <path d="M15.5 9V2H2v20h20V6h-6M2 9.5h6V3M2 15.5h7.5V22M15.5 17v5" /> },
  { label: "甘特图", art: <><path d="M1.5 5V2.5h21V5" strokeWidth="3" /><path d="M4 11h9M12 21h10" strokeWidth="4" strokeLinecap="butt" /><path d="M12 11h6.5v8" strokeWidth="1.4" /></> },
  { label: "思维导图", art: <><path d="M2 4h4M18 4h4M2 20h4M18 20h4M10.5 12h3" strokeWidth="4.5" /><path d="M5 4c5 0 5 2 5 8s0 8-5 8M19 4c-5 0-5 2-5 8s0 8 5 8" strokeWidth="1.4" /></> },
];

function Rail() {
  return (
    <div className="w-[52px] shrink-0 border-x border-[#cfcfcf] flex flex-col text-[#444]">
      <IconButton label="展开面板" className="h-[47px] pt-[3px] text-[#777]">
        <Ico size={28} sw={1.8}><path d="m2 1 8 11-8 11M14 1l8 11-8 11" /></Ico>
      </IconButton>
      <IconButton label="填充" className="h-[51px] mb-[6px] bg-[#007fff] text-white"><Ico size={28} sw={2}>{bucket}</Ico></IconButton>
      {RAIL.map((r) => (
        <IconButton key={r.label} label={r.label} className="h-[66px]"><Ico size={27} sw={2.6}>{r.art}</Ico></IconButton>
      ))}
    </div>
  );
}

function FillPanel() {
  return (
    <aside className="w-[423px] shrink-0">
      <div className="grid grid-cols-3 h-[47px] text-[18px] leading-6 text-black">
        <button type="button" className="font-bold">填充</button>
        <button type="button" className="bg-[#dcdcdc] rounded-bl-md">线条</button>
        <button type="button" className="bg-[#dcdcdc]">阴影</button>
      </div>
      <fieldset disabled className="pt-[10px] pl-[31px] text-[18px] leading-6 text-[#777]">
        {FILLS.map((f, i) => (
          <label key={f} className="h-[51px] flex items-center gap-[6px]">
            <input
              type="radio"
              name="fill"
              defaultChecked={i === 0}
              className="appearance-none w-4 h-4 rounded-full bg-white border border-[#dcdcdc] checked:bg-[radial-gradient(#b8b8b8_0_3px,white_5px)]"
            />
            {f}
          </label>
        ))}
      </fieldset>
    </aside>
  );
}

/* ---------- status bar and menu ---------- */

function StatusBar() {
  return (
    <footer className="h-[49px] shrink-0 border-t border-[#dcdcdc] flex items-center pb-px text-[18px] leading-6 text-black">
      <svg width="34" height="20" viewBox="0 0 34 20" className="ml-[26px] text-[#444]" fill="none" stroke="currentColor" strokeWidth="3" aria-hidden>
        <path d="M2 1v18M32 1v18" opacity=".7" strokeWidth="2.5" /><rect x="8" y="2" width="18" height="16" />
      </svg>
      <button type="button" className="ml-[35px] flex items-center">
        <span className="w-[145px] text-left">Page-1</span>
        <Caret />
      </button>
      <div className="w-px h-9 ml-1.5 bg-[#dcdcdc]" />
      <button type="button" className="ml-7 font-bold">Page-1</button>
      <IconButton label="新增页" className="ml-10 text-[#444]"><Ico size={16} sw={4}><path d="M12 2v20M2 12h20" /></Ico></IconButton>

      <div className="ml-auto flex items-center text-[#444]">
        <IconButton label="演示"><Ico size={26} sw={2.3}><circle cx="12" cy="12" r="10.8" /><path d="m9 6.5 9 5.5-9 5.5Z" fill="currentColor" stroke="none" opacity=".7" /></Ico></IconButton>
        <IconButton label="缩小" className="ml-4"><Ico size={16} sw={4}><path d="M2 12h20" /></Ico></IconButton>
        <input
          type="range"
          aria-label="缩放"
          defaultValue={10}
          className="ml-[11px] w-[122px] h-[7px] appearance-none rounded-full bg-[linear-gradient(to_right,#bebebe_16%,#dedede_16%)] [&::-webkit-slider-thumb]:appearance-none [&::-webkit-slider-thumb]:w-[18px] [&::-webkit-slider-thumb]:h-[18px] [&::-webkit-slider-thumb]:rounded-full [&::-webkit-slider-thumb]:bg-white [&::-webkit-slider-thumb]:border-[3px] [&::-webkit-slider-thumb]:border-[#bebebe]"
        />
        <IconButton label="放大" className="ml-[10px]"><Ico size={16} sw={4}><path d="M12 2v20M2 12h20" /></Ico></IconButton>
        <button type="button" className="ml-[22px] flex items-center text-black">
          <span className="w-[50px] text-left">50%</span>
          <Caret className="text-[#999]" />
        </button>
        <IconButton label="全屏" className="ml-[25px]"><Ico size={25} sw={3}><path d="M2 8V2h6M16 2h6v6M22 16v6h-6M8 22H2v-6" strokeLinecap="butt" /></Ico></IconButton>
        <IconButton label="适应宽度" className="ml-[10px] mr-[42px]"><Ico size={26} sw={2.6}><rect x="1.5" y="1.5" width="21" height="21" rx="1" /><path d="M6 12h12M8.5 9.5 6 12l2.5 2.5M15.5 9.5 18 12l-2.5 2.5" strokeWidth="1.9" /></Ico></IconButton>
      </div>
    </footer>
  );
}

function ContextMenu() {
  return (
    <div role="menu" className="absolute left-[1194px] top-[27px] w-[207px] py-[9px] rounded-md bg-[#fafafa] shadow-[0_1px_8px_rgba(0,0,0,0.25)] text-[18px] leading-6 text-black">
      {MENU.map((group, g) => (
        <div key={g}>
          {g > 0 && <hr className="ml-[33px] mt-[2px] mb-[5px] border-[#d4d4d4]" />}
          {group.map((m) => (
            <button
              key={m.label}
              type="button"
              role="menuitem"
              className={clsx("w-full h-9 flex items-center pl-[7px] pr-[10px] pb-[3px]", m.active && "bg-[#ededed]")}
            >
              <span className="w-[26px] text-[#444]">
                {m.checked && <Ico size={17} sw={3.5}><path d="m2 12 7 7L22 4" /></Ico>}
              </span>
              {m.label}
              {m.shortcut && <span className="ml-auto text-[#aaa]">{m.shortcut}</span>}
            </button>
          ))}
        </div>
      ))}
    </div>
  );
}

export default function App() {
  return (
    <div className="relative h-screen overflow-hidden flex flex-col -scale-x-100 bg-[#f5f5f5] font-['Noto_Sans_CJK_SC',sans-serif]">
      <TitleBar />
      <Ribbon />
      <div className="flex flex-1 min-h-0">
        <SymbolPanel />
        <Workspace />
        <Rail />
        <FillPanel />
      </div>
      <StatusBar />
      <ContextMenu />
      <div className="absolute right-0 bottom-[10px] w-[15px] h-[90px] rounded-l-sm bg-[#b9c0c6]/80 flex justify-center py-[7px]">
        <div className="w-[5px] rounded-full bg-[linear-gradient(to_bottom,#b4b8c0_35%,#d8d8b8_36%,#bcd8dc_60%,#a9d0ea)]" />
      </div>
    </div>
  );
}
